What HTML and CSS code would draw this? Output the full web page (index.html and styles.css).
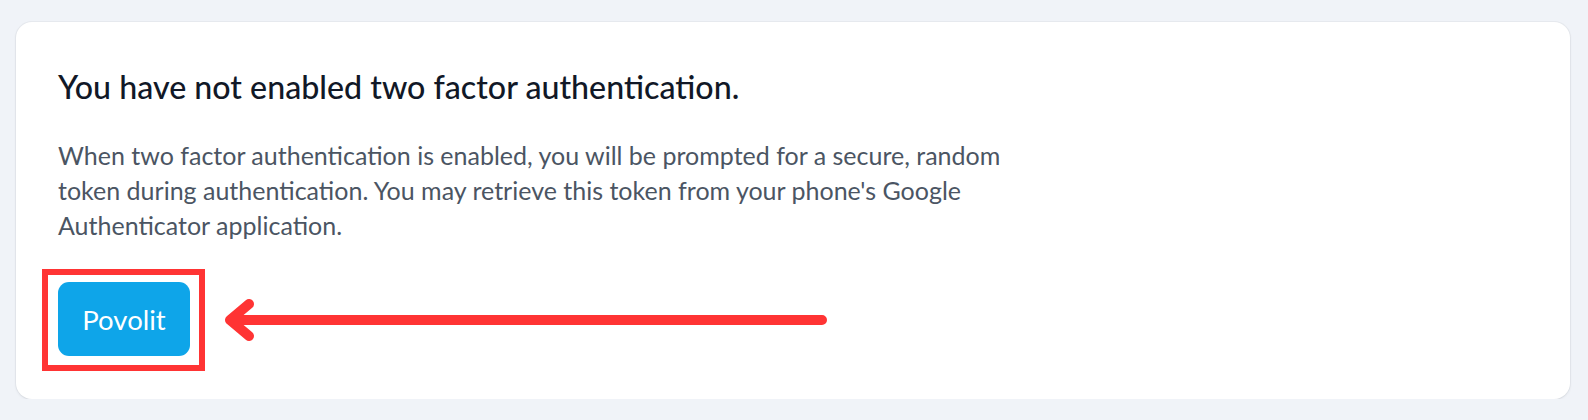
FILE: index.html
```html
<!DOCTYPE html>
<html lang="en">
<head>
<meta charset="utf-8">
<title>Two factor authentication</title>
<link rel="stylesheet" href="styles.css">
</head>
<body>
<main class="page">
  <section class="card">
    <h2 class="card-title">You have not enabled two factor authentication.</h2>
    <p class="card-text">When two factor authentication is enabled, you will be prompted for a secure, random<br>token during authentication. You may retrieve this token from your phone's Google<br>Authenticator application.</p>
    <div class="actions">
      <div class="highlight">
        <button class="btn" type="button">Povolit</button>
      </div>
      <svg class="arrow" width="612" height="50" viewBox="0 0 612 50" aria-hidden="true">
        <path d="M602 25 H11 M29 9 L10 25 L29 41" fill="none" stroke="#ff3434" stroke-width="10" stroke-linecap="round" stroke-linejoin="round"/>
      </svg>
    </div>
  </section>
</main>
</body>
</html>
```
FILE: styles.css
```css
html, body {
  margin: 0;
  padding: 0;
  background: #f0f3f8;
}
body {
  font-family: "Lato", "Inter", sans-serif;
}
.page {
  padding: 22px 18px 0 16px;
}
.card {
  background: #ffffff;
  border-radius: 16px;
  box-shadow: 0 1px 3px rgba(15, 23, 42, 0.08), 0 0 0 1px rgba(15, 23, 42, 0.035);
  padding: 40px 42px 28px 42px;
}
.card-title {
  margin: 0;
  font-size: 32.2px;
  line-height: 49px;
  font-weight: 500;
  color: #111827;
}
.card-text {
  margin: 27px 0 0 0;
  font-size: 25px;
  line-height: 35px;
  color: #4b5563;
  white-space: nowrap;
}
.actions {
  margin-top: 26px;
  margin-left: -16px;
  display: flex;
  align-items: center;
  gap: 15px;
}
.highlight {
  display: inline-flex;
  border: 6px solid #ff3434;
  padding: 7px 9px 9px 10px;
}
.btn {
  font-family: "Lato", "Inter", sans-serif;
  font-size: 27.5px;
  font-weight: 400;
  line-height: 35px;
  color: #ffffff;
  background: #0ea5e9;
  border: 0;
  border-radius: 11px;
  width: 132px;
  height: 74px;
  padding: 0;
  display: flex;
  align-items: center;
  justify-content: center;
}
.arrow {
  display: block;
  flex: none;
}
```
